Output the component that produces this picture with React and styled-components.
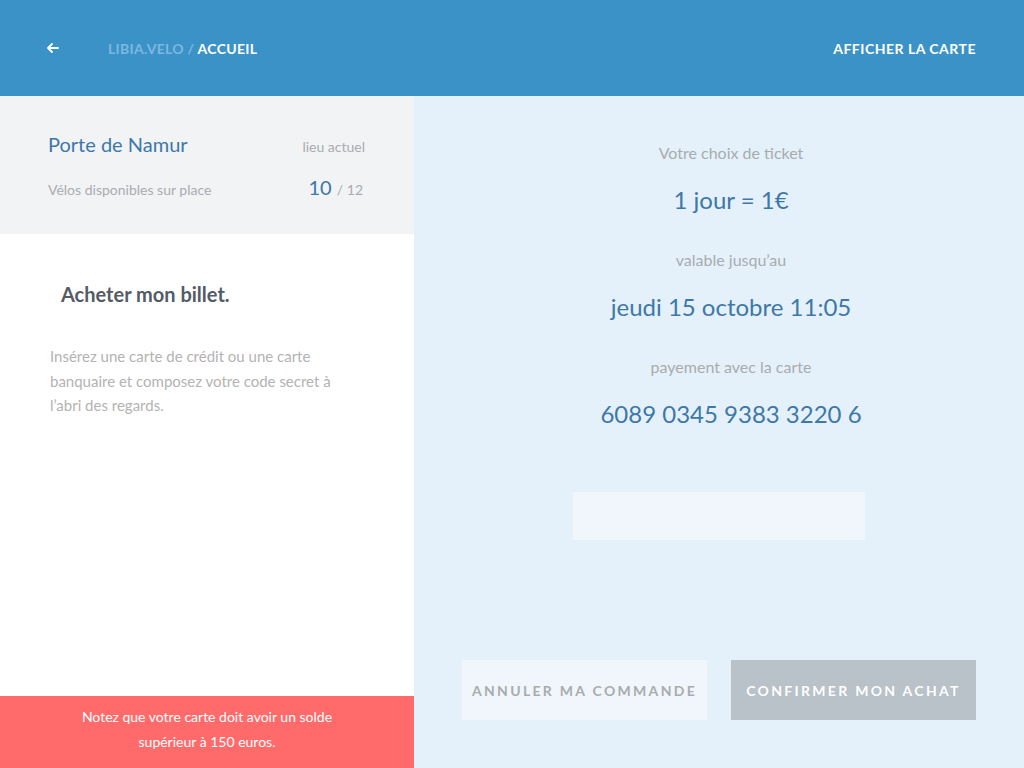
import React from "react";
import styled, { createGlobalStyle } from "styled-components";

const GlobalStyle = createGlobalStyle`
  html, body {
    margin: 0;
    padding: 0;
  }
  body {
    font-family: Lato, "Open Sans", sans-serif;
    -webkit-font-smoothing: antialiased;
  }
`;

const App = () => {
  return (
    <Page>
      <GlobalStyle />
      <Header>
        <HeaderLeft>
          <BackButton>
            <svg width="12" height="10" viewBox="0 0 12 10" fill="none">
              <path
                d="M11 5H1.5M5 1L1 5l4 4"
                stroke="#fff"
                strokeWidth="1.8"
                strokeLinecap="round"
                strokeLinejoin="round"
              />
            </svg>
          </BackButton>
          <Crumbs>
            <CrumbMuted>LIBIA.VELO /</CrumbMuted> ACCUEIL
          </Crumbs>
        </HeaderLeft>
        <HeaderLink>AFFICHER LA CARTE</HeaderLink>
      </Header>

      <Body>
        <LeftPanel>
          <StationBox>
            <StationRow>
              <StationName>Porte de Namur</StationName>
              <SmallGray>lieu actuel</SmallGray>
            </StationRow>
            <StationRow>
              <SmallGray>Vélos disponibles sur place</SmallGray>
              <Count>
                10 <CountTotal>/ 12</CountTotal>
              </Count>
            </StationRow>
          </StationBox>

          <Intro>
            <Title>Acheter mon billet.</Title>
            <Paragraph>
              Insérez une carte de crédit ou une carte banquaire et composez
              votre code secret à l’abri des regards.
            </Paragraph>
          </Intro>

          <Warning>
            Notez que votre carte doit avoir un solde
            <br />
            supérieur à 150 euros.
          </Warning>
        </LeftPanel>

        <RightPanel>
          <Summary>
            <Label>Votre choix de ticket</Label>
            <Value>1 jour = 1€</Value>
            <Label>valable jusqu’au</Label>
            <Value>jeudi 15 octobre 11:05</Value>
            <Label>payement avec la carte</Label>
            <Value>6089 0345 9383 3220 6</Value>
          </Summary>

          <CodeField />

          <Actions>
            <ActionButton>ANNULER MA COMMANDE</ActionButton>
            <ActionButton primary>CONFIRMER MON ACHAT</ActionButton>
          </Actions>
        </RightPanel>
      </Body>
    </Page>
  );
};

const Page = styled.div`
  width: 1024px;
  height: 768px;
  display: flex;
  flex-direction: column;
  overflow: hidden;
`;

const Header = styled.header`
  height: 96px;
  flex-shrink: 0;
  background: #3b92c7;
  display: flex;
  align-items: center;
  justify-content: space-between;
  padding: 0 48px 0 47px;
  box-sizing: border-box;
`;

const HeaderLeft = styled.div`
  display: flex;
  align-items: center;
  gap: 48px;
`;

const BackButton = styled.div`
  width: 13px;
  display: flex;
  align-items: center;
`;

const Crumbs = styled.div`
  color: #fff;
  font-weight: 700;
  font-size: 14px;
  letter-spacing: 0.3px;
`;

const CrumbMuted = styled.span`
  color: #7cb8e0;
`;

const HeaderLink = styled.div`
  color: #fff;
  font-weight: 700;
  font-size: 14px;
  letter-spacing: 0.5px;
`;

const Body = styled.div`
  flex: 1;
  display: flex;
`;

const LeftPanel = styled.div`
  width: 414px;
  background: #fff;
  display: flex;
  flex-direction: column;
`;

const StationBox = styled.div`
  height: 138px;
  box-sizing: border-box;
  background: #f2f3f5;
  padding: 36px 48px 0 48px;
  display: flex;
  flex-direction: column;
  gap: 19px;
`;

const StationRow = styled.div`
  display: flex;
  justify-content: space-between;
  align-items: baseline;
  padding-right: 1px;
`;

const StationName = styled.div`
  color: #3d78a9;
  font-size: 20px;
`;

const SmallGray = styled.div`
  color: #a9acaf;
  font-size: 14px;
`;

const Count = styled.div`
  color: #3d78a9;
  font-size: 20px;
  padding-right: 2px;
`;

const CountTotal = styled.span`
  color: #a9acaf;
  font-size: 14px;
`;

const Intro = styled.div`
  flex: 1;
  padding: 48px 50px 0 50px;
`;

const Title = styled.h1`
  margin: 0 0 38px 11px;
  font-size: 20px;
  font-weight: 700;
  color: #535c66;
`;

const Paragraph = styled.p`
  margin: 0;
  font-size: 15px;
  line-height: 24.5px;
  color: #b3b3b3;
  max-width: 295px;
`;

const Warning = styled.div`
  height: 72px;
  box-sizing: border-box;
  background: #ff6b6b;
  color: #fff;
  font-size: 14px;
  line-height: 25px;
  text-align: center;
  padding-top: 8px;
`;

const RightPanel = styled.div`
  flex: 1;
  background: #e5f1fa;
  display: flex;
  flex-direction: column;
  align-items: center;
  padding: 46px 48px 48px;
`;

const Summary = styled.div`
  display: flex;
  flex-direction: column;
  align-items: center;
  padding-left: 24px;
`;

const Label = styled.div`
  color: #a7acb0;
  font-size: 16px;
  height: 22px;
  line-height: 22px;
`;

const Value = styled.div`
  color: #3d78a9;
  font-size: 24px;
  height: 32px;
  line-height: 32px;
  margin: 20px 0 33px;
`;

const CodeField = styled.div`
  width: 292px;
  height: 48px;
  background: #f0f6fb;
  margin-top: 29px;
`;

const Actions = styled.div`
  margin-top: auto;
  width: 100%;
  display: grid;
  grid-template-columns: 1fr 1fr;
  gap: 24px;
`;

const ActionButton = styled.button`
  height: 60px;
  border: none;
  background: ${(p) => (p.primary ? "#b9c1c9" : "#f0f6fb")};
  color: ${(p) => (p.primary ? "#fff" : "#a9acaf")};
  font-family: Lato, sans-serif;
  font-size: 14px;
  font-weight: 700;
  letter-spacing: 2.3px;
`;

export default App;
